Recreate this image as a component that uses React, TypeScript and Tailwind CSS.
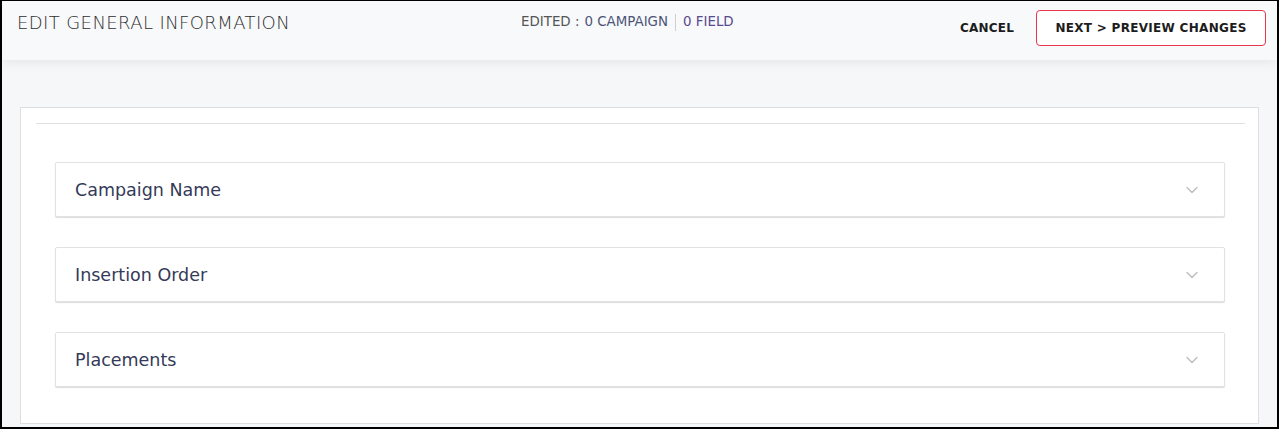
import {ChevronDown} from "lucide-react"

const sections = ["Campaign Name", "Insertion Order", "Placements"]

function Section({title}: {title: string}) {
  return (
    <div className="flex h-[55px] items-center justify-between rounded-[2px] border border-[#e2e2e2] bg-white pl-[19px] pr-[22px] shadow-[0_1px_1px_rgba(0,0,0,0.14)]">
      <span className="pt-[2px] text-[17.5px] text-[#343a58]">{title}</span>
      <ChevronDown className="h-[20px] w-[20px] text-[#bdbdbd]" strokeWidth={1.6}/>
    </div>
  )
}

export default function App() {
  return (
    <div
      className="flex h-[429px] w-full flex-col overflow-hidden border-x-2 border-t border-b-2 border-black bg-[#f6f7f9]"
      style={{fontFamily: '"DejaVu Sans", Verdana, sans-serif'}}
    >
      <header className="relative z-10 flex h-[59px] shrink-0 items-start bg-[#f8f9fb] pl-[15px] pr-[11px] shadow-[0_4px_10px_rgba(0,0,0,0.06)]">
        <div className="w-[504px] pt-[8px] text-[18px] font-extralight tracking-[0.4px] text-[#2e2e2e]">
          EDIT GENERAL INFORMATION
        </div>
        <div className="flex items-center pt-[11px] text-[13.4px] text-[#555]">
          <span>EDITED : </span>
          <span className="ml-[5px] text-[#4b5578]">0 CAMPAIGN</span>
          <span className="mx-[7px] h-[17px] w-px bg-[#cfcfcf]"/>
          <span className="text-[#5a4a8f]">0 FIELD</span>
        </div>
        <div className="ml-auto flex items-center gap-[22px] pt-[9px]">
          <button className="text-[12px] font-semibold tracking-[0.2px] text-[#1c1c1c]">CANCEL</button>
          <button className="h-[36px] w-[230px] rounded-[4px] border border-[#e8344e] bg-white text-[12px] font-semibold tracking-[0.3px] text-[#1c1c1c]">
            NEXT &gt; PREVIEW CHANGES
          </button>
        </div>
      </header>
      <main className="flex-1 px-[18px] pt-[47px]">
        <div className="h-[317px] border border-[#dedede] bg-white pl-[15px] pr-[13px] pt-[15px]">
          <div className="border-t border-[#e0e0e0]"/>
          <div className="flex flex-col gap-[30px] pl-[19px] pr-[20px] pt-[38px]">
            {sections.map((s) => (
              <Section key={s} title={s}/>
            ))}
          </div>
        </div>
      </main>
    </div>
  )
}
